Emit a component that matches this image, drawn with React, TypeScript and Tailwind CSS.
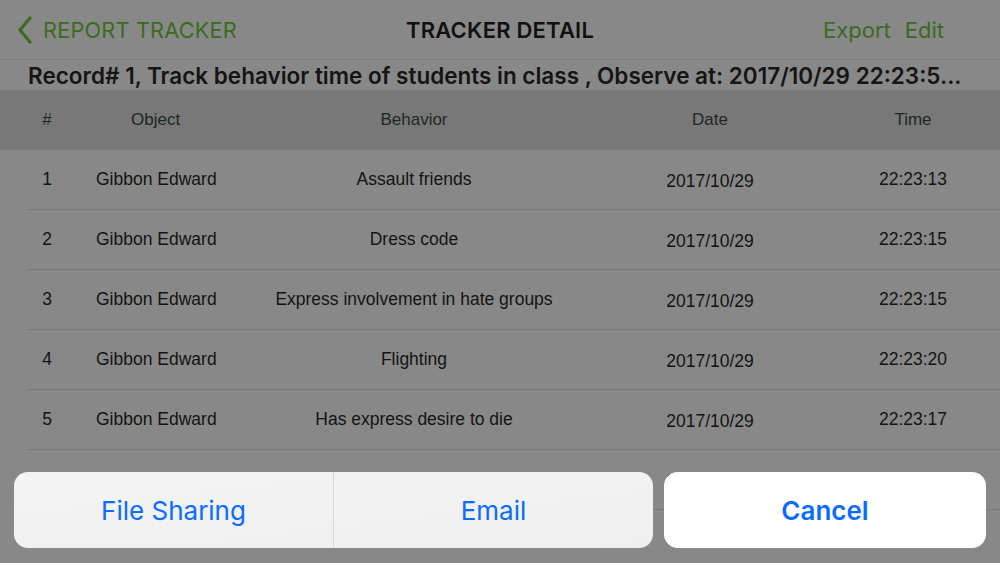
import React from 'react';

interface TrackRow {
  no: number;
  object: string;
  behavior: string;
  date: string;
  time: string;
}

const rows: TrackRow[] = [
  { no: 1, object: 'Gibbon Edward', behavior: 'Assault friends', date: '2017/10/29', time: '22:23:13' },
  { no: 2, object: 'Gibbon Edward', behavior: 'Dress code', date: '2017/10/29', time: '22:23:15' },
  { no: 3, object: 'Gibbon Edward', behavior: 'Express involvement in hate groups', date: '2017/10/29', time: '22:23:15' },
  { no: 4, object: 'Gibbon Edward', behavior: 'Flighting', date: '2017/10/29', time: '22:23:20' },
  { no: 5, object: 'Gibbon Edward', behavior: 'Has express desire to die', date: '2017/10/29', time: '22:23:17' },
  { no: 6, object: 'Gibbon Edward', behavior: 'Hitting', date: '2017/10/29', time: '22:23:19' },
];

const sans = { fontFamily: 'Inter, "Liberation Sans", sans-serif' };
const table = { fontFamily: '"Liberation Sans", Arial, sans-serif' };

export default function App() {
  return (
    <div className="relative w-[1000px] h-[563px] overflow-hidden bg-[#888888]">
      {/* Nav bar */}
      <div className="flex items-center h-[60px] px-[16px] pt-[2px] border-b border-[#7b7b7b]" style={sans}>
        <div className="flex items-center gap-[9px] w-[300px] text-[#3c6b20]">
          <svg width="18" height="30" viewBox="0 0 18 30" fill="none">
            <path d="M14 3 L4 15 L14 27" stroke="#3c6b20" strokeWidth="3.2" strokeLinecap="round" strokeLinejoin="round" />
          </svg>
          <span className="text-[21.7px] tracking-[0.2px]">REPORT TRACKER</span>
        </div>
        <div className="flex-1 text-center text-[22px] font-semibold text-[#111111] tracking-[0.2px]">TRACKER DETAIL</div>
        <div className="flex w-[300px] justify-end gap-[14px] pr-[40px] text-[22px] text-[#3c6b20]">
          <span>Export</span>
          <span>Edit</span>
        </div>
      </div>

      {/* Record title */}
      <div className="h-[30px] flex items-center pl-[28px] pt-[3px]" style={sans}>
        <div className="whitespace-nowrap text-[22.5px] font-semibold text-[#151515] leading-none">
          Record# 1, Track behavior time of students in class , Observe at: 2017/10/29 22:23:5...
        </div>
      </div>

      {/* Table header */}
      <div className="flex items-center h-[60px] bg-[#787878] text-[17px] text-[#1c2a22]" style={table}>
        <div className="w-[94px] text-center">#</div>
        <div className="w-[160px] pl-[37px]">Object</div>
        <div className="w-[320px] text-center">Behavior</div>
        <div className="w-[272px] text-center">Date</div>
        <div className="w-[134px] text-center">Time</div>
      </div>

      {/* Rows */}
      <div style={table}>
        {rows.map((r) => (
          <div key={r.no}>
            <div className="flex items-center h-[59px] text-[17.5px] text-[#141414]">
              <div className="w-[94px] text-center">{r.no}</div>
              <div className="w-[160px] pl-[2px] whitespace-nowrap">{r.object}</div>
              <div className="w-[320px] text-center whitespace-nowrap">{r.behavior}</div>
              <div className="w-[272px] text-center pt-[3px]">{r.date}</div>
              <div className="w-[134px] text-center">{r.time}</div>
            </div>
            <div className="ml-[27px] h-px bg-[#7a7a7a]" />
          </div>
        ))}
      </div>

      {/* Action sheet */}
      <div className="absolute left-[14px] right-[14px] top-[472px] flex gap-[11px]" style={sans}>
        <div className="flex w-[639px] h-[76px] rounded-[14px] bg-gradient-to-br from-[#f4f4f4] to-[#efefef] overflow-hidden">
          <div className="flex-1 flex items-center justify-center text-[26px] text-[#0a6cff]">File Sharing</div>
          <div className="w-px bg-[#d6d6d6]" />
          <div className="flex-1 flex items-center justify-center text-[26px] text-[#0a6cff]">Email</div>
        </div>
        <div className="flex-1 h-[76px] rounded-[14px] bg-white flex items-center justify-center text-[26px] font-semibold text-[#0a6cff]">
          Cancel
        </div>
      </div>
    </div>
  );
}
